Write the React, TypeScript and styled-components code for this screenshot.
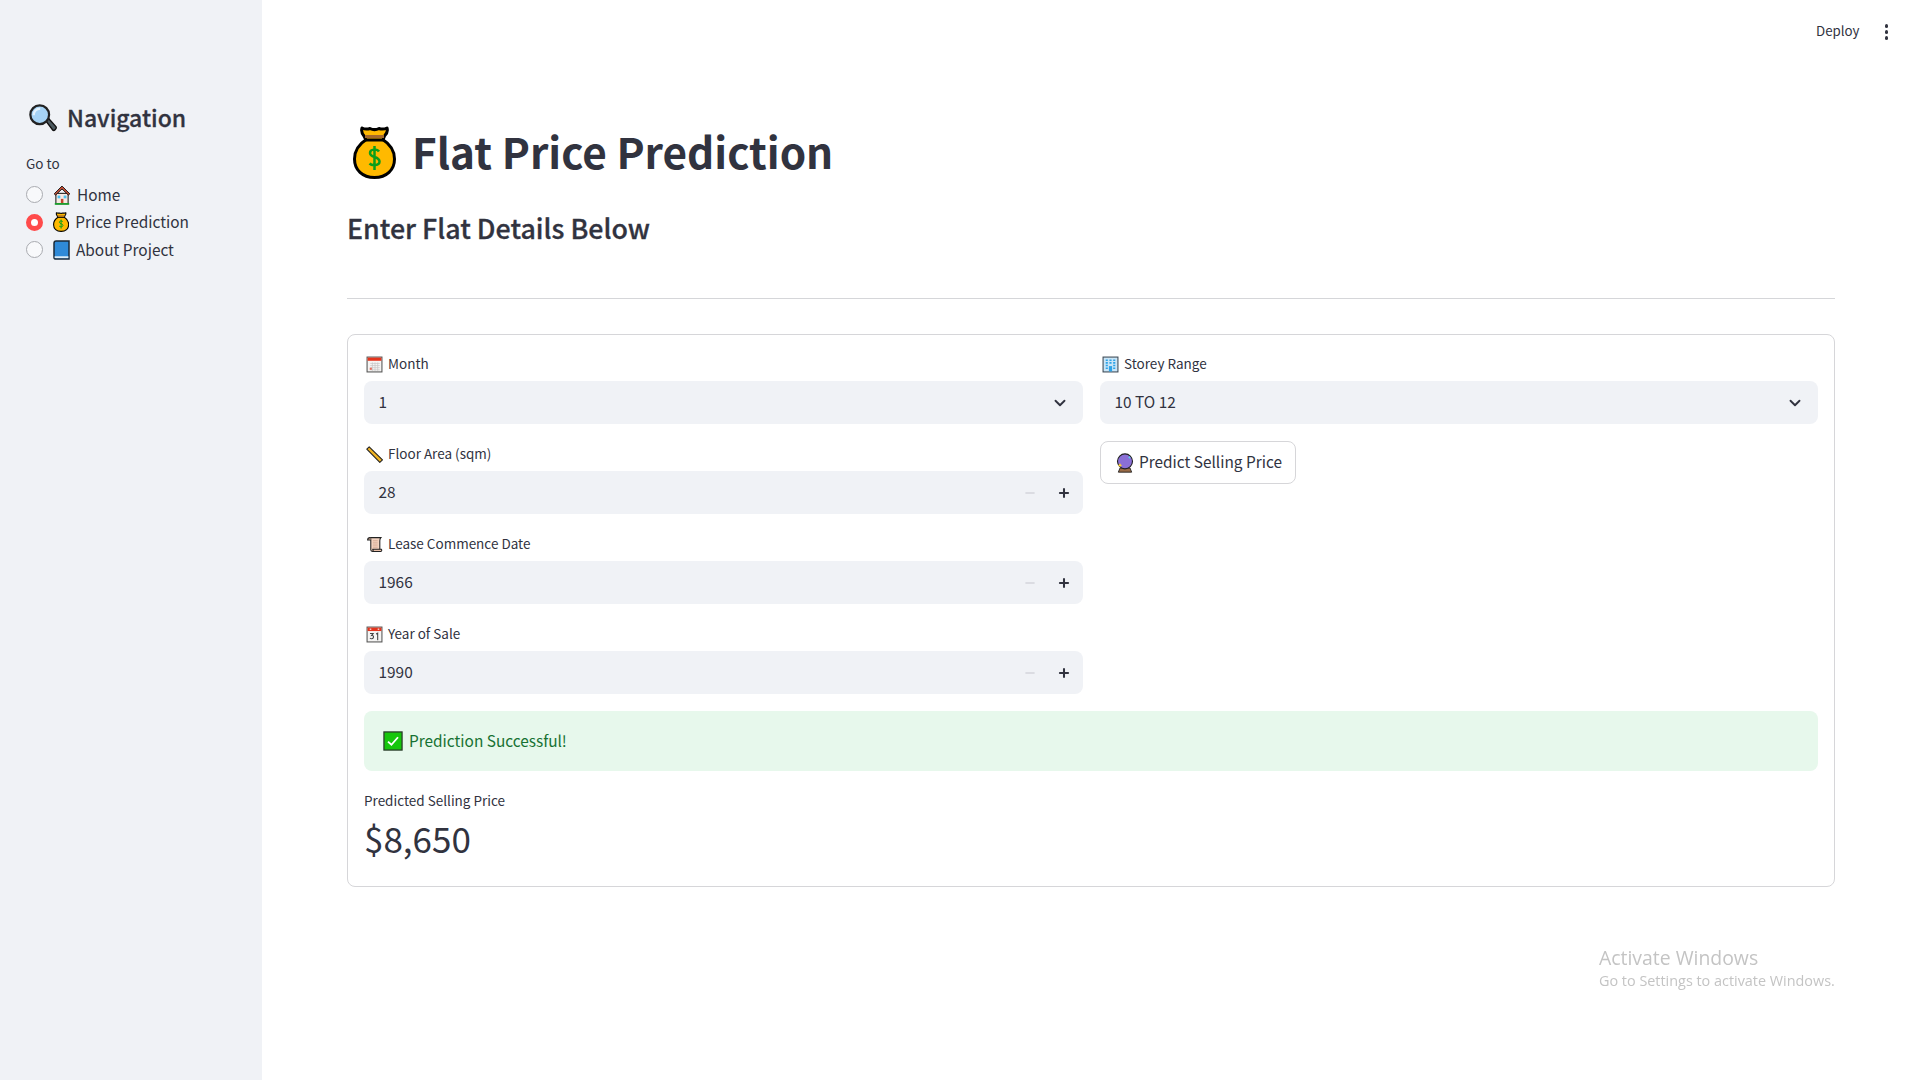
import styled, { createGlobalStyle } from 'styled-components';
import { ChevronDown, Minus, Plus } from 'lucide-react';

const GlobalStyle = createGlobalStyle`
  html, body {
    margin: 0;
    background: #fff;
  }
  body {
    font-family: 'Noto Sans CJK SC', 'Noto Sans', sans-serif;
    color: #31333f;
  }
`;

const Page = styled.div`
  display: flex;
  min-height: 1080px;
`;

const Sidebar = styled.aside`
  width: 262px;
  flex: none;
  box-sizing: border-box;
  background: #f0f2f6;
  padding: 98px 26px 0;
`;

const NavHeading = styled.h2`
  display: flex;
  align-items: center;
  gap: 9px;
  height: 40px;
  margin: 0;
  padding-left: 2px;
  font-size: 23px;
  font-weight: 500;
  -webkit-text-stroke: 0.3px #31333f;
  span {
    margin-bottom: 2px;
  }
`;

const GoTo = styled.div`
  margin-top: 14px;
  font-size: 13.5px;
  line-height: 22px;
`;

const RadioList = styled.div`
  display: flex;
  flex-direction: column;
  margin-top: 7px;
`;

const RadioRow = styled.div`
  display: flex;
  align-items: center;
  height: 27.5px;
  font-size: 15.4px;
  gap: 6px;
  span:last-child {
    margin-bottom: 2px;
  }
`;

const RadioDot = styled.span<{ $on?: boolean }>`
  box-sizing: border-box;
  width: 17px;
  height: 17px;
  border-radius: 50%;
  margin-right: 4px;
  background: ${(p) => (p.$on ? '#fff' : '#f8f9fb')};
  border: ${(p) => (p.$on ? '5.5px solid #ff4b4b' : '1px solid #a9abb0')};
`;

const Main = styled.main`
  flex: 1;
  position: relative;
  padding: 122px 85px 0;
`;

const TopBar = styled.div`
  position: absolute;
  top: 19px;
  right: 32px;
  display: flex;
  align-items: center;
  gap: 25px;
  font-size: 13.3px;
  line-height: 24px;
`;

const Dots = styled.span`
  display: flex;
  flex-direction: column;
  gap: 2.500px;
  margin-top: 2px;
  i {
    width: 3.500px;
    height: 3.500px;
    border-radius: 50%;
    background: #31333f;
  }
`;

const Title = styled.h1`
  display: flex;
  align-items: center;
  gap: 16px;
  height: 60px;
  margin: 0;
  padding-left: 6px;
  font-size: 42.3px;
  font-weight: 700;
  span {
    margin-bottom: 4px;
  }
`;

const SubTitle = styled.h3`
  margin: 26px 0 0;
  font-size: 26.8px;
  font-weight: 500;
  line-height: 40px;
  -webkit-text-stroke: 0.3px #31333f;
`;

const Rule = styled.hr`
  margin: 50px 0 0;
  border: 0;
  height: 1px;
  background: #d5d6d9;
`;

const FormCard = styled.section`
  margin-top: 35px;
  box-sizing: border-box;
  height: 553px;
  padding: 16px;
  border: 1px solid #d6d6d9;
  border-radius: 8px;
`;

const Columns = styled.div`
  display: grid;
  grid-template-columns: 719px 718px;
  column-gap: 17px;
`;

const Column = styled.div`
  display: flex;
  flex-direction: column;
  gap: 17px;
`;

const FieldLabel = styled.div`
  display: flex;
  align-items: center;
  gap: 5px;
  height: 23px;
  padding: 0 0 5px 2px;
  margin-bottom: 2px;
  font-size: 13.5px;
  svg {
    margin-top: 4px;
  }
`;

const InputBox = styled.div`
  display: flex;
  align-items: center;
  box-sizing: border-box;
  height: 43px;
  padding: 0 12px 3px 14.500px;
  border-radius: 8px;
  background: #f0f2f6;
  font-size: 15.400px;
`;

const InputValue = styled.span`
  flex: 1;
`;

const Stepper = styled.span<{ $muted?: boolean }>`
  display: flex;
  margin-top: 3px;
  margin-right: ${(p) => (p.$muted ? '20px' : '0')};
  color: ${(p) => (p.$muted ? '#d3d5db' : '#31333f')};
`;

const SelectArrow = styled(ChevronDown)`
  margin-top: 3px;
  margin-right: 2px;
`;

const PredictButton = styled.button`
  display: flex;
  align-items: center;
  align-self: flex-start;
  gap: 5px;
  height: 43px;
  padding: 0 13px 0 15px;
  border: 1px solid #d6d6d9;
  border-radius: 8px;
  background: #fff;
  color: #31333f;
  font: inherit;
  font-size: 15.400px;
  span {
    margin-bottom: 3px;
  }
`;

const SuccessAlert = styled.div`
  display: flex;
  align-items: center;
  gap: 6px;
  box-sizing: border-box;
  height: 60px;
  margin-top: 17px;
  padding: 0 19px;
  border-radius: 8px;
  background: #e7f8ec;
  color: #177233;
  font-size: 15.400px;
  span {
    margin-bottom: 3px;
  }
`;

const MetricLabel = styled.div`
  margin-top: 15px;
  font-size: 13.5px;
  line-height: 28px;
`;

const MetricValue = styled.div`
  margin-top: -3px;
  font-size: 35px;
  line-height: 54px;
`;

const Watermark = styled.div`
  position: fixed;
  left: 1599px;
  top: 945px;
  font-family: 'Open Sans', sans-serif;
  color: #c4c4c4;
  font-size: 14.400px;
  line-height: 20px;
  strong {
    display: block;
    font-weight: 400;
    font-size: 19.400px;
    line-height: 26px;
  }
`;

const Glyph = styled.svg`
  flex: none;
  display: block;
`;

type EmojiProps = { size: number };

// size is the height, the bag is narrower than it is tall
function MoneyBag({ size }: EmojiProps) {
  return (
    <Glyph width={(size * 43) / 53} height={size} viewBox="0 0 43 53">
      <path d="M14 13C6 18 1.500 25 1.500 33c0 11 8 18.500 20 18.500S41.500 44 41.500 33C41.500 25 37 18 29 13Z" fill="#ffb900" stroke="#000" strokeWidth="3" />
      <path d="M9 2c3 1.500 5 1.500 8 .5 3 1.500 6 1.500 9 0 3 1 5 1 8-.5 1 3 .5 5-2.500 8l-1.500 4h-17L11 10C8.500 7 8 5 9 2Z" fill="#ffb900" stroke="#000" strokeWidth="3" strokeLinejoin="round" />
      <rect x="12" y="9" width="19" height="3" fill="#a5692b" />
      <path d="M26 25.500c-1.500-2.500-9-3-9 1.500 0 5 9.500 3 9.500 8.500 0 4.500-7.500 4.500-10 2M21.500 20v24" fill="none" stroke="#0b9e1a" strokeWidth="2.500" />
    </Glyph>
  );
}

function Magnifier({ size }: EmojiProps) {
  return (
    <Glyph width={size} height={size} viewBox="0 0 32 32">
      <path d="M19 19l3-2.500 8 9c1 1.500-2 4.500-3.500 3.500Z" fill="#4d5a60" stroke="#111" strokeWidth="1.500" />
      <circle cx="12.500" cy="12.500" r="10" fill="#a6d3f5" stroke="#222" strokeWidth="2.400" />
      <path d="M6 13c0-4 3-7 7-7" fill="none" stroke="#e3f2fd" strokeWidth="2.500" />
    </Glyph>
  );
}

function House({ size }: EmojiProps) {
  return (
    <Glyph width={size} height={(size * 20) / 18} viewBox="0 0 32 36">
      <rect x="5" y="15" width="22" height="19" fill="#f7e8e2" stroke="#111" strokeWidth="1.800" />
      <path d="M16 2 2 16l2.500 2L16 7l11.500 11L30 16Z" fill="#d6553a" stroke="#111" strokeWidth="1.800" />
      <rect x="8" y="19" width="5" height="5" fill="#4cc2f1" />
      <rect x="19" y="19" width="5" height="5" fill="#4cc2f1" />
      <rect x="14" y="25" width="4.500" height="8" fill="#c2452d" />
      <rect x="3" y="32.500" width="26" height="3" fill="#17a52a" />
    </Glyph>
  );
}

function BlueBook({ size }: EmojiProps) {
  return (
    <Glyph width={(size * 17) / 20} height={size} viewBox="0 0 27 32">
      <path d="M1.500 5c0-2 1.500-3.500 3.500-3.500h20.500v29H5c-2 0-3.500-1.500-3.500-3Z" fill="#2f8ad8" stroke="#1b2a38" strokeWidth="2.400" />
      <path d="M2.500 26h22v3H2.500Z" fill="#dcecf8" />
    </Glyph>
  );
}

function TearCalendar({ size }: EmojiProps) {
  return (
    <Glyph width={size} height={size} viewBox="0 0 32 32">
      <rect x="2" y="2" width="28" height="28" fill="#f6f4f3" stroke="#555" strokeWidth="2" />
      <rect x="3" y="3" width="26" height="6" fill="#e5341d" />
      <path d="M8 14h18M8 18h18M8 22h18M8 26h18M12 12v16M17 12v16M22 12v16" stroke="#c5c5c5" strokeWidth="1.300" />
      <rect x="7" y="22" width="4" height="4" fill="#e56b5a" />
    </Glyph>
  );
}

function Ruler({ size }: EmojiProps) {
  return (
    <Glyph width={size} height={size} viewBox="0 0 32 32">
      <path d="M6 1.500 1.500 6l24.500 25 5-5Z" fill="#f0b323" stroke="#222" strokeWidth="2" strokeLinejoin="round" />
    </Glyph>
  );
}

function Scroll({ size }: EmojiProps) {
  return (
    <Glyph width={size} height={size} viewBox="0 0 32 32">
      <path d="M8 3h20c-2 2-2 4-2 6v20H12c-2 0-3-1-3-3V7c0-2 0-3-1-4Z" fill="#f3d3c0" stroke="#222" strokeWidth="2" />
      <path d="M8 3C5 3 3 4.500 3 7.500h6M12 29h16c2 0 2-3 1-4H12c2 1 2 3 0 4Z" fill="#e8bfa8" stroke="#222" strokeWidth="2" />
      <path d="M13 9h9M13 13h9M13 17h9M13 21h9" stroke="#c99c85" strokeWidth="1.400" />
    </Glyph>
  );
}

function DateCalendar({ size }: EmojiProps) {
  return (
    <Glyph width={size} height={size} viewBox="0 0 32 32">
      <rect x="2" y="2" width="28" height="28" fill="#f5f4f3" stroke="#555" strokeWidth="2" />
      <rect x="3" y="3" width="26" height="6.500" fill="#e5341d" />
      <rect x="7" y="5" width="3" height="2" fill="#fff" />
      <rect x="22" y="5" width="3" height="2" fill="#fff" />
      <path d="M7.500 14h6l-3 4c3-.5 4 1 3.500 3.500-.5 3-5 3-6.500 1M19 15l3-1.500V27" fill="none" stroke="#444" strokeWidth="2" />
    </Glyph>
  );
}

function Building({ size }: EmojiProps) {
  return (
    <Glyph width={size} height={size} viewBox="0 0 32 32">
      <rect x="2" y="2" width="28" height="28" fill="#c9e5f7" stroke="#3d4a55" strokeWidth="2" />
      <path d="M7 8h4M14 8h4M21 8h4M7 13h4M14 13h4M21 13h4M7 18h4M21 18h4M7 23h4M21 23h4" stroke="#2ea3e8" strokeWidth="3" />
      <rect x="13" y="19" width="6" height="10" fill="#2ea3e8" />
    </Glyph>
  );
}

function CrystalBall({ size }: EmojiProps) {
  return (
    <Glyph width={size} height={(size * 20) / 18} viewBox="0 0 32 36">
      <path d="M7 27h18l3 7.500H4Z" fill="#9a6a45" stroke="#222" strokeWidth="1.600" />
      <circle cx="16" cy="15" r="13.500" fill="#8a6fd6" stroke="#222" strokeWidth="2" />
      <path d="M24 6v4M22 8h4" stroke="#5fd0f0" strokeWidth="1.500" />
      <path d="M7 18l1.200 2.800L11 22l-2.800 1.200L7 26l-1.200-2.800L3 22l2.800-1.200Z" fill="#ffd335" />
    </Glyph>
  );
}

function CheckMark({ size }: EmojiProps) {
  return (
    <Glyph width={size} height={size} viewBox="0 0 32 32">
      <rect x="1.500" y="1.500" width="29" height="29" fill="#16c60c" stroke="#2a3a2a" strokeWidth="2" />
      <path d="M8 17l5.500 5L24 10" fill="none" stroke="#fff" strokeWidth="3" />
    </Glyph>
  );
}

function NumberField({ value }: { value: string }) {
  return (
    <InputBox>
      <InputValue>{value}</InputValue>
      <Stepper $muted>
        <Minus size={14} strokeWidth={2.5} />
      </Stepper>
      <Stepper>
        <Plus size={14} strokeWidth={3.5} />
      </Stepper>
    </InputBox>
  );
}

function SelectField({ value }: { value: string }) {
  return (
    <InputBox>
      <InputValue>{value}</InputValue>
      <SelectArrow size={18} strokeWidth={2.5} />
    </InputBox>
  );
}

export default function App() {
  return (
    <Page>
      <GlobalStyle />
      <Sidebar>
        <NavHeading>
          <Magnifier size={30} />
          <span>Navigation</span>
        </NavHeading>
        <GoTo>Go to</GoTo>
        <RadioList>
          <RadioRow>
            <RadioDot />
            <House size={18} />
            <span>Home</span>
          </RadioRow>
          <RadioRow>
            <RadioDot $on />
            <MoneyBag size={20} />
            <span>Price Prediction</span>
          </RadioRow>
          <RadioRow>
            <RadioDot />
            <BlueBook size={20} />
            <span>About Project</span>
          </RadioRow>
        </RadioList>
      </Sidebar>
      <Main>
        <TopBar>
          <span>Deploy</span>
          <Dots>
            <i />
            <i />
            <i />
          </Dots>
        </TopBar>
        <Title>
          <MoneyBag size={53} />
          <span>Flat Price Prediction</span>
        </Title>
        <SubTitle>Enter Flat Details Below</SubTitle>
        <Rule />
        <FormCard>
          <Columns>
            <Column>
              <div>
                <FieldLabel>
                  <TearCalendar size={17} />
                  Month
                </FieldLabel>
                <SelectField value="1" />
              </div>
              <div>
                <FieldLabel>
                  <Ruler size={17} />
                  Floor Area (sqm)
                </FieldLabel>
                <NumberField value="28" />
              </div>
              <div>
                <FieldLabel>
                  <Scroll size={17} />
                  Lease Commence Date
                </FieldLabel>
                <NumberField value="1966" />
              </div>
              <div>
                <FieldLabel>
                  <DateCalendar size={17} />
                  Year of Sale
                </FieldLabel>
                <NumberField value="1990" />
              </div>
            </Column>
            <Column>
              <div>
                <FieldLabel>
                  <Building size={17} />
                  Storey Range
                </FieldLabel>
                <SelectField value="10 TO 12" />
              </div>
              <PredictButton>
                <CrystalBall size={18} />
                <span>Predict Selling Price</span>
              </PredictButton>
            </Column>
          </Columns>
          <SuccessAlert>
            <CheckMark size={20} />
            <span>Prediction Successful!</span>
          </SuccessAlert>
          <MetricLabel>Predicted Selling Price</MetricLabel>
          <MetricValue>$8,650</MetricValue>
        </FormCard>
        <Watermark>
          <strong>Activate Windows</strong>
          Go to Settings to activate Windows.
        </Watermark>
      </Main>
    </Page>
  );
}
